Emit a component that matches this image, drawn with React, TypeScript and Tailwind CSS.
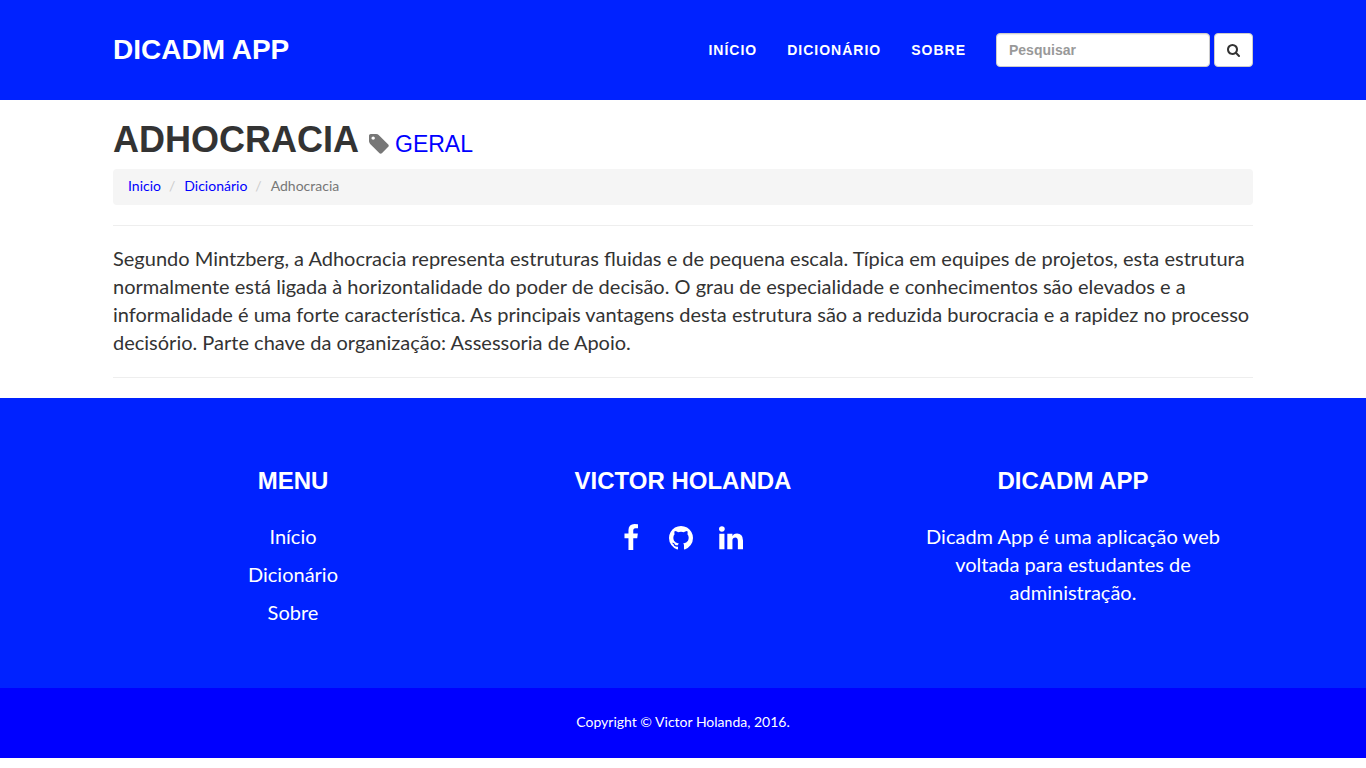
const menu = [
  ["Início", "#inicio"],
  ["Dicionário", "#dicionario"],
  ["Sobre", "#sobre"],
];

function Icon({ d, w, className }: { d: string; w: number; className: string }) {
  return (
    <svg viewBox={`0 0 ${w} 1792`} className={className} fill="currentColor" aria-hidden="true">
      <path d={d} />
    </svg>
  );
}

const SEARCH =
  "M1152 832q0-185-131.500-316.500t-316.500-131.500-316.500 131.500-131.500 316.500 131.500 316.500 316.500 131.500 316.500-131.500 131.500-316.500zm512 832q0 52-38 90t-90 38q-54 0-90-38l-343-342q-179 124-399 124-143 0-273.500-55.500t-225-150-150-225-55.500-273.500 55.500-273.500 150-225 225-150 273.500-55.500 273.500 55.500 225 150 150 225 55.500 273.500q0 220-124 399l343 343q37 37 37 90z";
const TAG =
  "M448 448q0-53-37.500-90.500t-90.500-37.500-90.500 37.500-37.500 90.500 37.500 90.500 90.500 37.500 90.500-37.500 37.500-90.500zm1067 576q0 53-37 90l-491 492q-39 37-91 37-53 0-90-37l-715-716q-38-37-64.500-101t-26.500-117v-416q0-52 38-90t90-38h416q53 0 117 26.500t102 64.500l715 714q37 39 37 91z";
const FACEBOOK = "M959 12v264h-157q-86 0-116 36t-30 108v189h293l-39 296h-254v759h-306v-759h-255v-296h255v-218q0-186 104-288.500t277-102.500q147 0 228 12z";
const GITHUB =
  "M768 128q209 0 385.500 103t279.500 279.500 103 385.500q0 251-146.500 451.500t-378.500 277.500q-27 5-40-7t-13-30q0-3 .5-76.500t.5-134.500q0-97-52-142 57-6 102.500-18t94-39 81-66.500 53-105 20.500-150.500q0-119-79-206 37-91-8-204-28-9-81 11t-92 44l-38 24q-93-26-192-26t-192 26q-16-11-42.500-27t-83.500-38.500-85-13.500q-45 113-8 204-79 87-79 206 0 85 20.500 150t52.500 105 80.500 67 94 39 102.500 18q-39 36-49 103-21 10-45 15t-57 5-65.500-21.500-55.500-62.500q-19-32-48.500-52t-49.500-24l-20-3q-21 0-29 4.500t-5 11.500 9 14 13 12l7 5q22 10 43.500 38t31.500 51l10 23q13 38 44 61.500t67 30 69.500 7 55.500-3.500l23-4q0 38 .5 88.500t.5 54.500q0 18-13 30t-40 7q-232-77-378.500-277.500t-146.500-451.500q0-209 103-385.500t279.500-279.500 385.500-103z";
const LINKEDIN =
  "M349 625v991h-330v-991h330zm21-306q1 73-50.500 122t-135.500 49h-2q-82 0-132-49t-50-122q0-74 51.500-122.500t134.500-48.500 133 48.500 51 122.500zm1166 729v568h-329v-530q0-105-40.500-164.500t-126.500-59.500q-63 0-105.500 34.500t-63.500 85.500q-11 30-11 81v553h-329q2-399 2-647t-1-296l-1-48h329v144h-2q20-32 41-56t56.500-52 87-43.500 114.500-15.500q171 0 275 113.500t104 332.500z";

const heading = "font-[Liberation_Sans,sans-serif] font-bold uppercase";
const footerHeading = "mb-7 text-[24px] leading-[26px]";
const social = "flex w-9 justify-center";

export default function App() {
  return (
    <div className="bg-white font-[Lato,sans-serif] text-[#333333]">
      <header className={`bg-[#0022ff] text-white ${heading}`}>
        <nav className="mx-auto flex min-h-[100px] max-w-[1140px] flex-wrap items-center justify-between">
          <a href="#inicio" className="text-[28px] leading-5">Dicadm App</a>
          <div className="flex items-center">
            <ul className="flex text-sm leading-5 tracking-[1px]">
              {menu.map(([label, href]) => (
                <li key={label} className="pr-[30px]"><a href={href} className="block">{label}</a></li>
              ))}
            </ul>
            <form className="flex gap-1" role="search">
              <input
                type="search"
                aria-label="Pesquisar"
                placeholder="Pesquisar"
                className="h-[34px] w-[214px] rounded border border-[#cccccc] bg-white px-3 text-sm text-[#555555] shadow-[inset_0_1px_1px_rgba(0,0,0,0.075)] placeholder:text-[#999999]"
              />
              <button type="submit" aria-label="Pesquisar" className="flex h-[34px] w-[39px] items-center justify-center rounded border border-[#cccccc] bg-white text-[#333333]">
                <Icon d={SEARCH} w={1664} className="h-[14px] w-[13px]" />
              </button>
            </form>
          </div>
        </nav>
      </header>

      <main className="mx-auto max-w-[1140px]">
        <h1 className="mt-5 mb-[10px] flex items-baseline gap-[10px] font-[Liberation_Sans,sans-serif] text-[36px] leading-[39px] font-bold uppercase">
          Adhocracia
          <small className="text-[23px] leading-6 font-normal text-[#777777]">
            <Icon d={TAG} w={1536} className="mr-[6px] inline-block h-6 w-5 align-[-4px]" />
            <a href="#geral" className="text-[#0000ff]">Geral</a>
          </small>
        </h1>
        <ol className="flex rounded bg-[#f5f5f5] px-[15px] pt-[7px] pb-[9px] text-sm leading-5">
          <li><a href="#inicio" className="text-[#0000ff]">Inicio</a></li>
          <li><span className="pr-[9px] pl-2 text-[#cccccc]">/</span><a href="#dicionario" className="text-[#0000ff]">Dicionário</a></li>
          <li className="text-[#777777]"><span className="pr-[9px] pl-2 text-[#cccccc]">/</span>Adhocracia</li>
        </ol>
        <hr className="mt-5 mb-[18px] border-[#eeeeee]" />
        <p className="text-[20px] leading-7">
          Segundo Mintzberg, a Adhocracia representa estruturas fluidas e de pequena escala. Típica em equipes de projetos, esta estrutura normalmente está ligada à horizontalidade do poder de decisão. O grau de especialidade e conhecimentos são elevados e a informalidade é uma forte característica. As principais vantagens desta estrutura são a reduzida burocracia e a rapidez no processo decisório. Parte chave da organização: Assessoria de Apoio.
        </p>
        <hr className="mt-[21px] mb-5 border-[#eeeeee]" />
      </main>

      <footer className="text-center text-white">
        <div className="bg-[#0022ff] pt-[70px] pb-[62px]">
          <div className="mx-auto grid max-w-[1170px] grid-cols-3 text-[20px] leading-7">
            <section className="px-[15px]">
              <h2 className={`${footerHeading} ${heading}`}>Menu</h2>
              <ul className="flex flex-col gap-[10px]">
                {menu.map(([label, href]) => (
                  <li key={label}><a href={href}>{label}</a></li>
                ))}
              </ul>
            </section>
            <section className="px-[15px]">
              <h2 className={`${footerHeading} ${heading}`}>Victor Holanda</h2>
              <ul className="flex items-center justify-center gap-[14px] pt-[2px] pr-[5px]">
                <li><a href="#facebook" aria-label="Facebook" className={social}><Icon d={FACEBOOK} w={1024} className="h-7 w-4" /></a></li>
                <li><a href="#github" aria-label="GitHub" className={social}><Icon d={GITHUB} w={1536} className="h-7 w-6" /></a></li>
                <li><a href="#linkedin" aria-label="LinkedIn" className={social}><Icon d={LINKEDIN} w={1536} className="h-7 w-6" /></a></li>
              </ul>
            </section>
            <section className="px-[15px]">
              <h2 className={`${footerHeading} ${heading}`}>Dicadm App</h2>
              <p className="px-5">Dicadm App é uma aplicação web voltada para estudantes de administração.</p>
            </section>
          </div>
        </div>
        <div className="bg-[#0000ff] pt-6 pb-[26px] text-sm leading-5">Copyright © Victor Holanda, 2016.</div>
      </footer>
    </div>
  );
}
